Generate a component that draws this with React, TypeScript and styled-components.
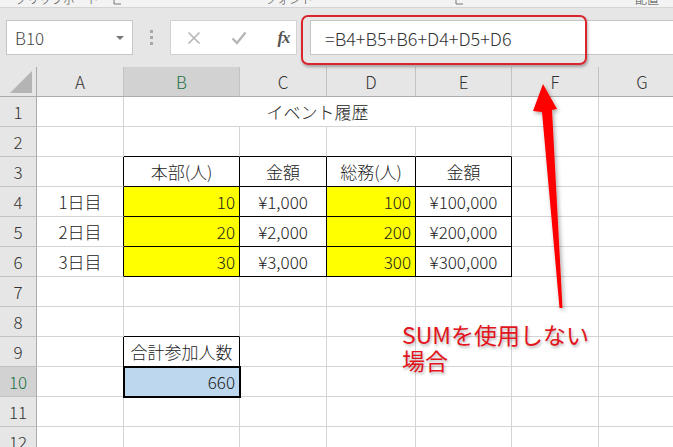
import React from "react";
import styled, { createGlobalStyle } from "styled-components";

const FONT = `"Noto Sans CJK JP", "Noto Sans", sans-serif`;

const Global = createGlobalStyle`
  html, body { margin: 0; padding: 0; background: #fff; overflow: hidden; }
  #root { width: 673px; height: 447px; }
`;

const Page = styled.div`
  position: relative;
  width: 673px;
  height: 447px;
  overflow: hidden;
  background: #fff;
  font-family: ${FONT};
  font-weight: 300;
  display: flex;
  flex-direction: column;
`;

/* ---------- ribbon remnant ---------- */
const Ribbon = styled.div`
  flex: none;
  height: 7px;
  background: #f3f3f3;
  border-bottom: 1px solid #d4d4d4;
  display: flex;
  align-items: flex-end;
  overflow: hidden;
`;
const RibbonLabel = styled.span<{ $ml: number }>`
  flex: none;
  margin-left: ${(p) => p.$ml}px;
  margin-bottom: 2px;
  font-size: 12px;
  line-height: 12px;
  color: #444;
  white-space: nowrap;
`;
const Launcher = styled.svg<{ $ml: number }>`
  flex: none;
  margin-left: ${(p) => p.$ml}px;
  margin-bottom: 2px;
`;

/* ---------- formula bar ---------- */
const FormulaBar = styled.div`
  flex: none;
  height: 59px;
  background: #e6e6e6;
  display: flex;
  align-items: center;
  padding-left: 6px;
`;
const NameBox = styled.div`
  flex: none;
  box-sizing: border-box;
  width: 127px;
  height: 35px;
  background: #fff;
  border: 1px solid #c6c6c6;
  display: flex;
  align-items: center;
  justify-content: space-between;
  padding: 0 8px 0 8px;
  font-size: 17px;
  color: #444;
`;
const Caret = styled.span`
  width: 0;
  height: 0;
  border-left: 4px solid transparent;
  border-right: 4px solid transparent;
  border-top: 4px solid #777;
`;
const Grip = styled.div`
  flex: none;
  margin-left: 17px;
  display: flex;
  flex-direction: column;
  gap: 3px;
`;
const GripDot = styled.span`
  width: 3px;
  height: 3px;
  background: #a8a8a8;
`;
const ButtonBox = styled.div`
  flex: none;
  margin-left: 17px;
  box-sizing: border-box;
  width: 127px;
  height: 35px;
  background: #fff;
  border: 1px solid #d2d2d2;
  display: grid;
  grid-template-columns: 45px 45px 45px;
  align-items: center;
  justify-items: center;
`;
const Fx = styled.span`
  font-family: "Liberation Serif", serif;
  font-style: italic;
  font-weight: bold;
  font-size: 17px;
  color: #555;
  letter-spacing: -1px;
`;
const FormulaInput = styled.div`
  flex: 1;
  margin-left: 13px;
  box-sizing: border-box;
  height: 35px;
  background: #fff;
  border: 1px solid #c6c6c6;
  border-right: none;
  display: flex;
  align-items: center;
  padding-left: 14px;
  font-size: 18px;
  color: #333;
  white-space: nowrap;
`;

/* ---------- sheet ---------- */
const Sheet = styled.div`
  flex: none;
  display: grid;
  grid-template-columns: 37px 87px 116px 87px 89px 96px 87px 87px;
  grid-auto-rows: 30px;
`;
const Corner = styled.div`
  box-sizing: border-box;
  background: #e6e6e6;
  border-right: 1px solid #ababab;
  border-bottom: 1px solid #ababab;
  display: flex;
  align-items: flex-end;
  justify-content: flex-end;
  padding: 0 4px 3px 0;
`;
const ColHead = styled.div<{ $sel?: boolean }>`
  box-sizing: border-box;
  background: ${(p) => (p.$sel ? "#d2d2d2" : "#e6e6e6")};
  border-right: 1px solid #c2c2c2;
  border-bottom: 1px solid #ababab;
  display: flex;
  align-items: center;
  justify-content: center;
  font-size: 17px;
  color: ${(p) => (p.$sel ? "#217346" : "#333")};
`;
const RowHead = styled.div<{ $sel?: boolean }>`
  box-sizing: border-box;
  background: ${(p) => (p.$sel ? "#d2d2d2" : "#e6e6e6")};
  border-right: 1px solid #ababab;
  border-bottom: 1px solid #c2c2c2;
  display: flex;
  align-items: center;
  justify-content: center;
  font-size: 17px;
  color: ${(p) => (p.$sel ? "#217346" : "#333")};
`;
const Cell = styled.div<{
  $align: string;
  $bg: string;
  $r: boolean;
  $b: boolean;
  $span: number;
  $sel: boolean;
}>`
  box-sizing: border-box;
  grid-column: span ${(p) => p.$span};
  background: ${(p) => p.$bg};
  border-right: 1px solid ${(p) => (p.$r ? "#000" : "#d4d4d4")};
  border-bottom: 1px solid ${(p) => (p.$b ? "#000" : "#d4d4d4")};
  display: flex;
  align-items: center;
  justify-content: ${(p) => p.$align};
  padding: 0 4px;
  font-size: 17px;
  color: #222;
  white-space: nowrap;
  position: relative;
  z-index: ${(p) => (p.$sel ? 1 : 0)};
  outline: ${(p) => (p.$sel ? "2px solid #000" : "none")};
  outline-offset: -1px;
`;

/* ---------- overlays ---------- */
const Callout = styled.div`
  position: absolute;
  left: 301px;
  top: 15px;
  width: 286px;
  height: 50px;
  box-sizing: border-box;
  border: 2px solid #d8262c;
  border-radius: 7px;
  box-shadow: 1px 2px 3px rgba(0, 0, 0, 0.3);
  pointer-events: none;
`;
const Overlay = styled.svg`
  position: absolute;
  left: 0;
  top: 0;
  pointer-events: none;
`;
const Note = styled.div`
  position: absolute;
  left: 402px;
  top: 321px;
  font-size: 23px;
  font-weight: 400;
  line-height: 26px;
  color: #e3141b;
  text-shadow: 1px 2px 3px rgba(0, 0, 0, 0.3);
  white-space: nowrap;
`;

type C = {
  t?: string;
  a?: "flex-start" | "center" | "flex-end";
  bg?: string;
  r?: boolean;
  b?: boolean;
  span?: number;
  sel?: boolean;
};

const Y = "#ffff00";
const E: C = {};
const blank = (n: number): C[] => Array.from({ length: n }, () => ({}));

const dataRow = (day: string, b: string, c: string, d: string, e: string): C[] => [
  { t: day, a: "center", r: true },
  { t: b, a: "flex-end", bg: Y, r: true, b: true },
  { t: c, a: "center", r: true, b: true },
  { t: d, a: "flex-end", bg: Y, r: true, b: true },
  { t: e, a: "center", r: true, b: true },
  E,
  E,
];

const rows: C[][] = [
  [E, { t: "イベント履歴", a: "center", span: 4 }, E, E],
  [E, { b: true }, { b: true }, { b: true }, { b: true }, E, E],
  [
    { r: true },
    { t: "本部(人)", a: "center", r: true, b: true },
    { t: "金額", a: "center", r: true, b: true },
    { t: "総務(人)", a: "center", r: true, b: true },
    { t: "金額", a: "center", r: true, b: true },
    E,
    E,
  ],
  dataRow("1日目", "10", "¥1,000", "100", "¥100,000"),
  dataRow("2日目", "20", "¥2,000", "200", "¥200,000"),
  dataRow("3日目", "30", "¥3,000", "300", "¥300,000"),
  blank(7),
  [E, { b: true }, ...blank(5)],
  [{ r: true }, { t: "合計参加人数", a: "center", r: true, b: true }, ...blank(5)],
  [E, { t: "660", a: "flex-end", bg: "#bdd7ee", sel: true, r: true, b: true }, ...blank(5)],
  blank(7),
  blank(7),
];

const cols = ["A", "B", "C", "D", "E", "F", "G"];

export default function App() {
  return (
    <Page>
      <Global />
      <Ribbon>
        <RibbonLabel $ml={15}>クリップボード</RibbonLabel>
        <Launcher $ml={14} width="9" height="9" viewBox="0 0 9 9">
          <path d="M1 0 V8 H8" fill="none" stroke="#777" strokeWidth="1" />
        </Launcher>
        <RibbonLabel $ml={143}>フォント</RibbonLabel>
        <Launcher $ml={142} width="9" height="9" viewBox="0 0 9 9">
          <path d="M1 0 V8 H8" fill="none" stroke="#777" strokeWidth="1" />
        </Launcher>
        <RibbonLabel $ml={171}>配置</RibbonLabel>
      </Ribbon>

      <FormulaBar>
        <NameBox>
          <span>B10</span>
          <Caret />
        </NameBox>
        <Grip>
          <GripDot />
          <GripDot />
          <GripDot />
        </Grip>
        <ButtonBox>
          <svg width="14" height="14" viewBox="0 0 14 14">
            <path d="M1.5 1.5 L12.5 12.5 M12.5 1.5 L1.5 12.5" stroke="#b5b5b5" strokeWidth="1.6" />
          </svg>
          <svg width="16" height="14" viewBox="0 0 16 14">
            <path d="M1.5 7.5 L6 12 L14.5 1.5" fill="none" stroke="#b5b5b5" strokeWidth="2.4" />
          </svg>
          <Fx>fx</Fx>
        </ButtonBox>
        <FormulaInput>=B4+B5+B6+D4+D5+D6</FormulaInput>
      </FormulaBar>

      <Sheet>
        <Corner>
          <svg width="22" height="22" viewBox="0 0 22 22">
            <polygon points="22,0 22,22 0,22" fill="#b4b4b4" />
          </svg>
        </Corner>
        {cols.map((c) => (
          <ColHead key={c} $sel={c === "B"}>
            {c}
          </ColHead>
        ))}
        {rows.map((row, ri) => (
          <React.Fragment key={ri}>
            <RowHead $sel={ri === 9}>{ri + 1}</RowHead>
            {row.map((c, ci) => (
              <Cell
                key={ci}
                $align={c.a ?? "flex-start"}
                $bg={c.bg ?? "#fff"}
                $r={!!c.r}
                $b={!!c.b}
                $span={c.span ?? 1}
                $sel={!!c.sel}
              >
                {c.t}
              </Cell>
            ))}
          </React.Fragment>
        ))}
      </Sheet>

      <Callout />
      <Overlay width="673" height="447" viewBox="0 0 673 447">
        <defs>
          <filter id="sh" x="-50%" y="-10%" width="200%" height="120%">
            <feDropShadow dx="1.5" dy="2" stdDeviation="2" floodColor="#000" floodOpacity="0.35" />
          </filter>
        </defs>
        <polygon
          points="543,84 557,109 552,110 562.5,308 559.5,308 542,112 533,111"
          fill="#f00"
          filter="url(#sh)"
        />
      </Overlay>
      <Note>
        SUMを使用しない
        <br />
        場合
      </Note>
    </Page>
  );
}
